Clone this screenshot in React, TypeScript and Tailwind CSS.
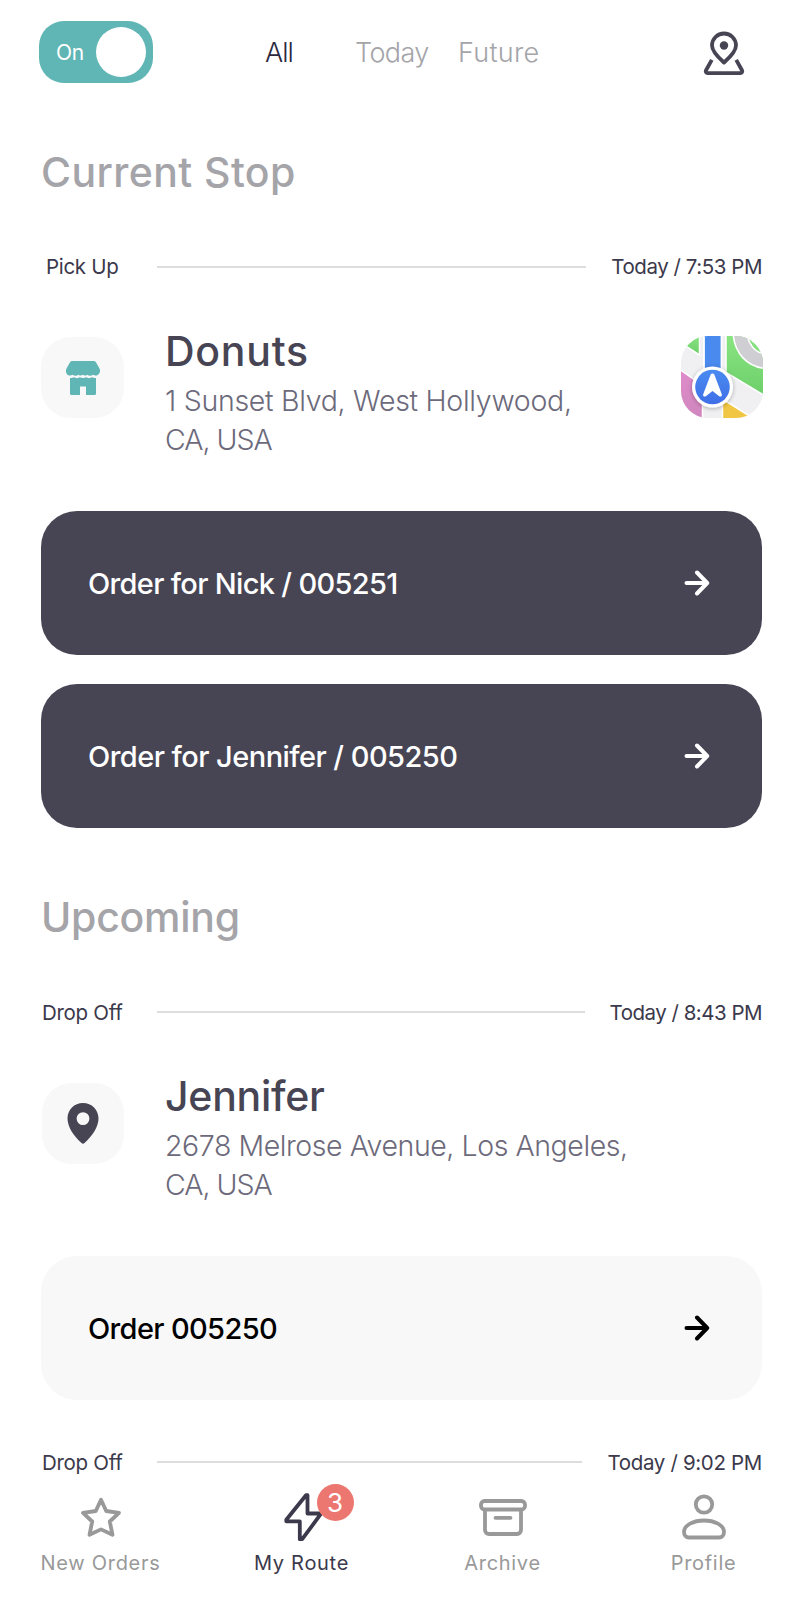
import { useState } from "react";
import clsx from "clsx";

type Order = { id: string; label: string; className: string };

type Stop = {
  kind: string;
  time: string;
  timeClass: string;
  name: string;
  nameClass: string;
  address: { text: string; className: string }[];
};

const pickUp: Stop = {
  kind: "Pick Up",
  time: "Today / 7:53 PM",
  timeClass: "tracking-[-0.45px]",
  name: "Donuts",
  nameClass: "tracking-[0.75px]",
  address: [
    { text: "1 Sunset Blvd, West Hollywood,", className: "tracking-[-0.28px]" },
    { text: "CA, USA", className: "tracking-[-1px]" },
  ],
};

const dropOff: Stop = {
  kind: "Drop Off",
  time: "Today / 8:43 PM",
  timeClass: "tracking-[-0.5px]",
  name: "Jennifer",
  nameClass: "tracking-[-0.25px]",
  address: [
    { text: "2678 Melrose Avenue, Los Angeles,", className: "tracking-[-0.43px]" },
    { text: "CA, USA", className: "tracking-[-1px]" },
  ],
};

const pickUpOrders: Order[] = [
  { id: "005251", label: "Order for Nick / 005251", className: "tracking-[-0.67px]" },
  { id: "005250", label: "Order for Jennifer / 005250", className: "tracking-[-0.54px]" },
];

function MapPinIcon() {
  return (
    <svg width="42" height="45" viewBox="0 0 42 45" fill="none" stroke="#474554" strokeWidth="3.8" strokeLinecap="round" strokeLinejoin="round">
      <path d="M21 31.5C16.5 27.5 9 21 9 14.5a12 12 0 0 1 24 0C33 21 25.500 27.500 21 31.500Z" />
      <circle cx="21" cy="14.500" r="4.200" fill="#474554" stroke="none" />
      <path d="M8.800 28.800 2.900 39.500a1.900 1.900 0 0 0 1.700 2.700h32.800a1.900 1.900 0 0 0 1.700-2.700L33.200 28.800" strokeLinecap="butt" />
    </svg>
  );
}

function StoreIcon() {
  return (
    <svg width="36" height="34" viewBox="0 0 36 34" fill="#60b5b5">
      <path d="M7.500 0h21a3 3 0 0 1 2.600 1.400l3.400 6.100c1.200 2.400.4 5-1.700 6.400-1.500.9-3.400.8-4.800-.2-1.700 1.300-4.100 1.300-5.900 0-1.300 1.100-3 1.100-4.300.1-1.300 1-3 1-4.300-.1-1.800 1.300-4.200 1.300-5.900 0-1.400 1-3.300 1.100-4.800.2-1.700-1.400-2.500-4-1.300-6.400l3.400-6.100A3 3 0 0 1 7.500 0Z" />
      <path d="M5 17c1.600.3 2.800 0 4-.7 1.900 1.100 4.200 1.100 5.900 0 1.900 1 4.300 1 6.200 0 1.700 1.100 4 1.100 5.900 0 1.200.7 2.400 1 4 .7v15.500a1.500 1.500 0 0 1-1.500 1.500H21v-8.500h-6V34H6.500A1.500 1.500 0 0 1 5 32.500V17Z" />
    </svg>
  );
}

function PinIcon() {
  return (
    <svg width="32" height="41" viewBox="0 0 32 41" fill="#474554" fillRule="evenodd">
      <path d="M16 0c8.800 0 15.500 6.800 15.500 15.500 0 8-6 17.500-14 24.500a2.300 2.300 0 0 1-3 0C6.500 33 .5 23.500.5 15.500.5 6.800 7.200 0 16 0Zm0 9.200a6.400 6.400 0 1 0 0 12.800 6.400 6.400 0 0 0 0-12.800Z" />
    </svg>
  );
}

function ArrowIcon() {
  return (
    <svg width="26" height="26" viewBox="0 0 26 26" fill="none" stroke="currentColor" strokeWidth="4" strokeLinecap="round" strokeLinejoin="round">
      <path d="M2.500 13H23M13 2.500 23.200 13 13 23.500" />
    </svg>
  );
}

function MapsAppIcon() {
  return (
    <svg width="82" height="82" viewBox="0 0 82 82">
      <defs>
        <clipPath id="maps-tile">
          <rect width="82" height="82" rx="27" />
        </clipPath>
        <linearGradient id="maps-green" x1="0" y1="0" x2="0" y2="1">
          <stop offset="0" stopColor="#8ae482" />
          <stop offset="1" stopColor="#6ccf6a" />
        </linearGradient>
        <linearGradient id="maps-pink" x1="0" y1="0" x2="0" y2="1">
          <stop offset="0" stopColor="#e08ccb" />
          <stop offset="1" stopColor="#cf86bd" />
        </linearGradient>
        <linearGradient id="maps-blue" x1="0" y1="0" x2="0" y2="1">
          <stop offset="0" stopColor="#4a8bf0" />
          <stop offset="1" stopColor="#3f6fe8" />
        </linearGradient>
        <filter id="maps-shadow" x="-30%" y="-30%" width="160%" height="160%">
          <feDropShadow dx="0" dy="1" stdDeviation="2" floodColor="#000" floodOpacity="0.3" />
        </filter>
      </defs>
      <g clipPath="url(#maps-tile)">
        <rect width="82" height="82" fill="#f0f0f3" />
        <path d="M18.500-2v21L3 9V-2Z" fill="url(#maps-green)" stroke="#fff" strokeWidth="1.500" />
        <path d="M-2 33 21.500 49.500V84H-2Z" fill="url(#maps-pink)" stroke="#fff" strokeWidth="1.500" />
        <path d="M45-2h40v62.500L45 36.500Z" fill="url(#maps-green)" stroke="#fff" strokeWidth="1.500" />
        <path d="M52-3C53.500 17.500 66 31 85 32.500V18C74.500 17.500 67 8 66-3Z" fill="#cfcfd3" stroke="#fff" strokeWidth="1.500" />
        <path d="M41.500 63 67 79v5H41.500Z" fill="#f1c644" stroke="#fff" strokeWidth="1.500" />
        <path d="M23-2h17.500v45H23Z" fill="#4a89ee" stroke="#fff" strokeWidth="1.800" />
        <circle cx="31.500" cy="51" r="20.500" fill="#fff" filter="url(#maps-shadow)" />
        <circle cx="31.500" cy="51" r="17.300" fill="url(#maps-blue)" />
        <path d="M31.500 37.500c.9 0 1.600.5 2 1.500l7.300 19.300c.6 1.700-1.200 3-2.600 1.900l-6.700-5.200-6.700 5.200c-1.400 1.100-3.200-.2-2.600-1.900L29.500 39c.4-1 1.100-1.500 2-1.500Z" fill="#fff" />
      </g>
    </svg>
  );
}

function StarIcon() {
  return (
    <svg width="42" height="41" viewBox="0 0 42 41" fill="none" stroke="currentColor" strokeWidth="3.800" strokeLinejoin="round">
      <path d="M21 2.800 26.200 14l12.800 1.800-9.200 8.700L32.500 37.800 21 32.400 9.500 37.800l2.700-13.300L3 15.800 15.800 14Z" />
    </svg>
  );
}

function BoltIcon() {
  return (
    <svg width="40" height="50" viewBox="0 0 40 50" fill="none" stroke="currentColor" strokeWidth="3.800" strokeLinejoin="round">
      <path d="M24 3.200h1.500V21.500H39.200L20.200 47.200h-2.400V29.300H4.300V27.800Z" />
    </svg>
  );
}

function ArchiveIcon() {
  return (
    <svg width="48" height="37" viewBox="0 0 48 37" fill="none" stroke="currentColor" strokeWidth="3.800" strokeLinecap="round" strokeLinejoin="round">
      <rect x="2" y="2" width="44" height="8.500" rx="3.500" />
      <path d="M6 11v20a4 4 0 0 0 4 4h28a4 4 0 0 0 4-4V11M16.500 18.800h15" />
    </svg>
  );
}

function ProfileIcon() {
  return (
    <svg width="44" height="46" viewBox="0 0 44 46" fill="none" stroke="currentColor" strokeWidth="3.800" strokeLinejoin="round">
      <circle cx="22" cy="10.500" r="8.200" />
      <path d="M22 26.500c10.500 0 20 4.600 20 11.500 0 3.200-2 5.500-5 5.500H7c-3 0-5-2.300-5-5.500 0-6.900 9.500-11.500 20-11.500Z" />
    </svg>
  );
}

function StopMeta({ kind, time, timeClass, inset }: { kind: string; time: string; timeClass: string; inset?: boolean }) {
  return (
    <div className="flex h-8 items-center text-[20.5px] text-[#3b394b]">
      <span className={clsx("w-[116px] shrink-0 tracking-[-0.3px] whitespace-nowrap", inset ? "pl-[5px]" : "pt-0.5 pl-px")}>
        {kind}
      </span>
      <span className="h-0.5 flex-1 bg-[#dddddf]" />
      <span className={clsx("ml-[25px] whitespace-nowrap", !inset && "pt-0.5", timeClass)}>{time}</span>
    </div>
  );
}

function StopInfo({ stop, icon, action }: { stop: Stop; icon: React.ReactNode; action?: React.ReactNode }) {
  return (
    <div className="mt-11 flex items-start">
      <div
        className={clsx(
          "flex h-[81px] shrink-0 items-center justify-center rounded-[30px] bg-[#f8f8f8]",
          action ? "mt-2.5 w-[83px]" : "mt-[11px] ml-px w-[82px]",
        )}
      >
        {icon}
      </div>
      <div className="ml-[41px] flex-1">
        <h2 className={clsx("text-[41px] leading-[48px] font-medium text-[#474554]", stop.nameClass)}>{stop.name}</h2>
        <p className="mt-1.5 text-[28.5px] leading-[39px] font-light whitespace-nowrap text-[#6c6a7b]">
          {stop.address.map((line) => (
            <span key={line.text} className={clsx("block", line.className)}>
              {line.text}
            </span>
          ))}
        </p>
      </div>
      {action && <div className="mt-[9px] -mr-px">{action}</div>}
    </div>
  );
}

function OrderCard({ label, className, dark }: { label: string; className: string; dark?: boolean }) {
  return (
    <button
      className={clsx(
        "flex h-36 w-full items-center justify-between rounded-[36px] pr-[52px] pl-[47px] text-[29px] font-medium",
        dark ? "bg-[#474554] text-white" : "bg-[#f8f8f8] text-black",
      )}
    >
      <span className={clsx("pt-0.5 whitespace-nowrap", className)}>{label}</span>
      <ArrowIcon />
    </button>
  );
}

const tabs = [
  { label: "All", className: "w-[90px] tracking-[-1px]" },
  { label: "Today", className: "w-[103px] tracking-[-0.6px]" },
  { label: "Future", className: "tracking-[0.3px]" },
];

const navItems = [
  { label: "New Orders", icon: StarIcon },
  { label: "My Route", icon: BoltIcon, badge: 3 },
  { label: "Archive", icon: ArchiveIcon },
  { label: "Profile", icon: ProfileIcon },
];

export default function App() {
  const [tab, setTab] = useState("All");
  const [online, setOnline] = useState(true);

  return (
    <div className="flex h-[1600px] w-[804px] flex-col overflow-hidden bg-white font-[Inter,sans-serif]">
      <header className="flex h-[104px] shrink-0 items-center pr-[59px] pl-[39px]">
        <button
          onClick={() => setOnline(!online)}
          className={clsx(
            "mb-px flex h-[62px] w-[114px] items-center justify-between rounded-[25px] pr-[7px] pl-[17px] text-[21px] text-white",
            online ? "bg-[#60b5b5]" : "flex-row-reverse bg-gray-300",
          )}
        >
          <span className="pt-[3px] tracking-[-0.3px]">{online ? "On" : "Off"}</span>
          <span className="size-[50px] rounded-full bg-white" />
        </button>
        <div className="ml-[112px] flex flex-1 pt-0.5 text-[27px] font-light">
          {tabs.map(({ label, className }) => (
            <button
              key={label}
              onClick={() => setTab(label)}
              className={clsx("text-left", className, tab === label ? "text-[#2b2940]" : "text-[#a4a4a9]")}
            >
              {label}
            </button>
          ))}
        </div>
        <div className="pt-[3px]">
          <MapPinIcon />
        </div>
      </header>

      <main className="flex-1 pr-[42px] pl-[41px]">
        <h1 className="mt-11 text-[41px] leading-[48px] font-medium tracking-[0.4px] text-[#a4a4a9]">Current Stop</h1>
        <div className="mt-[55px]">
          <StopMeta kind={pickUp.kind} time={pickUp.time} timeClass={pickUp.timeClass} inset />
        </div>
        <StopInfo stop={pickUp} icon={<StoreIcon />} action={<MapsAppIcon />} />
        <div className="mt-[52px] space-y-[29px]">
          {pickUpOrders.map((order) => (
            <OrderCard key={order.id} label={order.label} className={order.className} dark />
          ))}
        </div>

        <h1 className="mt-[65px] text-[41px] leading-[48px] font-medium tracking-[-0.25px] text-[#a4a4a9]">Upcoming</h1>
        <div className="mt-[55px]">
          <StopMeta kind={dropOff.kind} time={dropOff.time} timeClass={dropOff.timeClass} />
        </div>
        <StopInfo stop={dropOff} icon={<PinIcon />} />
        <div className="mt-[52px]">
          <OrderCard label="Order 005250" className="tracking-[-0.64px]" />
        </div>
        <div className="mt-[46px]">
          <StopMeta kind="Drop Off" time="Today / 9:02 PM" timeClass="tracking-[-0.33px]" />
        </div>
      </main>

      <nav className="grid h-[122px] shrink-0 grid-cols-4 bg-white">
        {navItems.map(({ label, icon: Icon, badge }) => (
          <a
            key={label}
            className={clsx("flex flex-col items-center pt-[13px]", badge ? "text-[#3b394b]" : "text-[#999999]")}
          >
            <span className="relative flex h-[52px] items-center">
              <Icon />
              {badge && (
                <span className="absolute -top-[7px] left-[35px] flex size-[37px] items-center justify-center rounded-full bg-[#ec7770] text-[26px] text-white">
                  {badge}
                </span>
              )}
            </span>
            <span className="mt-2 text-[20px] leading-6 tracking-[0.7px]">{label}</span>
          </a>
        ))}
      </nav>
    </div>
  );
}
